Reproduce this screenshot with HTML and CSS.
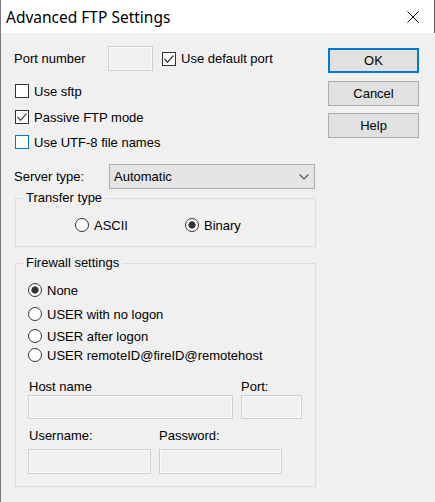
FILE: index.html
```html
<!DOCTYPE html>
<html>
<head>
<meta charset="utf-8">
<title>Advanced FTP Settings</title>
<link rel="stylesheet" href="styles.css">
</head>
<body>
<div class="window">
  <div class="titlebar">
    <span class="title">Advanced FTP Settings</span>
    <svg class="close" width="12" height="12" viewBox="0 0 12 12"><path d="M0.5 0.5L11.5 11.5M11.5 0.5L0.5 11.5" stroke="#000" stroke-width="1" fill="none"/></svg>
  </div>
  <div class="content">
    <div class="form">
      <div class="port-row">
        <span class="port-lbl">Port number</span>
        <span class="textbox port-box"></span>
        <span class="check default-port">
          <span class="box"><svg width="12" height="12" viewBox="0 0 12 12"><path d="M1.5 6L4.5 9.2L10.5 2.5" stroke="#3a3a3a" stroke-width="1.3" fill="none"/></svg></span>
          <span>Use default port</span>
        </span>
      </div>
      <span class="check row-check sftp"><span class="box"></span><span>Use sftp</span></span>
      <span class="check row-check passive"><span class="box"><svg width="12" height="12" viewBox="0 0 12 12"><path d="M1.5 6L4.5 9.2L10.5 2.5" stroke="#555" stroke-width="1.3" fill="none"/></svg></span><span>Passive FTP mode</span></span>
      <span class="check row-check utf"><span class="box hover"></span><span>Use UTF-8 file names</span></span>

      <div class="server-row">
        <span class="server-lbl">Server type:</span>
        <div class="combo">
          <span>Automatic</span>
          <svg width="10" height="6" viewBox="0 0 10 6"><path d="M0.5 0.5L5 5L9.5 0.5" stroke="#555" stroke-width="1.2" fill="none"/></svg>
        </div>
      </div>

      <div class="group transfer">
        <span class="legend">Transfer type</span>
        <div class="transfer-row">
          <span class="radio radio-ascii"><span class="circle"></span><span>ASCII</span></span>
          <span class="radio"><span class="circle on"></span><span>Binary</span></span>
        </div>
      </div>

      <div class="group firewall">
        <span class="legend fw-legend">Firewall settings</span>
        <span class="radio fw-row fw1"><span class="circle on"></span><span>None</span></span>
        <span class="radio fw-row fw2"><span class="circle"></span><span>USER with no logon</span></span>
        <span class="radio fw-row fw3"><span class="circle"></span><span>USER after logon</span></span>
        <span class="radio fw-row fw4"><span class="circle"></span><span>USER remoteID@fireID@remotehost</span></span>

        <div class="host-grid">
          <span class="flbl first">Host name</span>
          <span class="flbl">Port:</span>
          <span class="textbox host-box"></span>
          <span class="textbox host-box"></span>
        </div>
        <div class="user-grid">
          <span class="flbl first">Username:</span>
          <span class="flbl">Password:</span>
          <span class="textbox user-box"></span>
          <span class="textbox user-box"></span>
        </div>
      </div>
    </div>

    <div class="buttons">
      <div class="btn default">OK</div>
      <div class="btn cancel">Cancel</div>
      <div class="btn help">Help</div>
    </div>
  </div>
</div>
</body>
</html>
```

FILE: styles.css
```css
* { box-sizing: border-box; }

body {
  margin: 0;
  font-family: "Liberation Sans", Arial, sans-serif;
  font-size: 13px;
  color: #000;
  background: #f0f0f0;
}

.window {
  width: 435px;
  height: 502px;
  background: #f0f0f0;
  border-left: 1px solid #7a7a7a;
  display: flex;
  flex-direction: column;
  overflow: hidden;
}

.titlebar {
  height: 33px;
  flex: none;
  background: #fff;
  display: flex;
  align-items: center;
  justify-content: space-between;
  padding: 0 15px 0 5px;
  border-right: 1px solid #5b5b5b;
}

.title {
  font-family: "Noto Sans", "Liberation Sans", sans-serif;
  font-size: 15.5px;
  color: #000;
}

.close { margin-top: 1px; }

.content {
  display: flex;
  padding: 13px 0 0 13px;
}

.form {
  width: 301px;
  display: flex;
  flex-direction: column;
}

/* port row */
.port-row {
  display: flex;
  align-items: center;
  height: 25px;
}
.port-lbl { width: 94px; }
.port-box { width: 45px; height: 25px; }
.default-port { margin-left: 9px; }

.textbox {
  display: block;
  background: #f0f0f0;
  border: 1px solid #cfcfcf;
  box-shadow: inset 0 0 0 1px #f9f9f9;
}

/* checkboxes */
.check {
  display: flex;
  align-items: center;
}
.row-check {
  height: 20px;
  padding-left: 1px;
}
.sftp { margin-top: 10px; }
.passive { margin-top: 6px; }
.utf { margin-top: 5px; }

.box {
  width: 14px;
  height: 14px;
  flex: none;
  border: 1px solid #333;
  background: #fff;
  margin-right: 5px;
  display: flex;
  align-items: center;
  justify-content: center;
}
.box.hover { border-color: #0078d7; }

/* server type */
.server-row {
  display: flex;
  align-items: center;
  height: 25px;
  margin-top: 12px;
}
.server-lbl { width: 95px; }
.combo {
  width: 206px;
  height: 25px;
  background: #e5e5e5;
  border: 1px solid #acacac;
  display: flex;
  align-items: center;
  justify-content: space-between;
  padding: 0 5px 0 4px;
}

/* group boxes */
.group {
  margin-left: 1px;
  width: 301px;
  border: 1px solid #dcdcdc;
  display: flex;
  flex-direction: column;
}
.legend {
  align-self: flex-start;
  height: 16px;
  line-height: 16px;
  margin-top: -9px;
  margin-left: 7px;
  padding: 0 3px;
  background: #f0f0f0;
}

.transfer {
  margin-top: 9px;
  padding-bottom: 13px;
}
.transfer-row {
  display: flex;
  align-items: center;
  height: 16px;
  margin-top: 11px;
  padding-left: 59px;
}
.radio {
  display: flex;
  align-items: center;
}
.radio-ascii { width: 110px; }

.circle {
  width: 14px;
  height: 14px;
  flex: none;
  border: 1px solid #333;
  border-radius: 50%;
  background: #fff;
  margin-right: 5px;
}
.circle.on {
  background: radial-gradient(circle, #333 0 3.3px, #fff 3.9px);
}

.firewall {
  margin-top: 16px;
  padding: 0 0 12px 12px;
}
.fw-legend { margin-left: -5px; }
.fw-row { height: 18px; }
.fw1 { margin-top: 10px; }
.fw2 { margin-top: 6px; }
.fw3 { margin-top: 4px; }
.fw4 { margin-top: 1px; }

.host-grid {
  display: grid;
  grid-template-columns: 205px 61px;
  grid-template-rows: 16px 24px;
  column-gap: 8px;
  margin-top: 15px;
}
.user-grid {
  display: grid;
  grid-template-columns: 123px 123px;
  grid-template-rows: 16px 25px;
  column-gap: 8px;
  row-gap: 5px;
  margin-top: 9px;
}
.flbl { line-height: 16px; }
.flbl.first { padding-left: 1px; }

/* buttons */
.buttons {
  width: 91px;
  margin-left: 13px;
  margin-top: 2px;
  display: flex;
  flex-direction: column;
}
.btn {
  height: 25px;
  background: #e1e1e1;
  border: 1px solid #adadad;
  display: flex;
  align-items: center;
  justify-content: center;
}
.btn.default { border: 2px solid #0078d7; }
.cancel { margin-top: 8px; }
.help { margin-top: 7px; }
```
